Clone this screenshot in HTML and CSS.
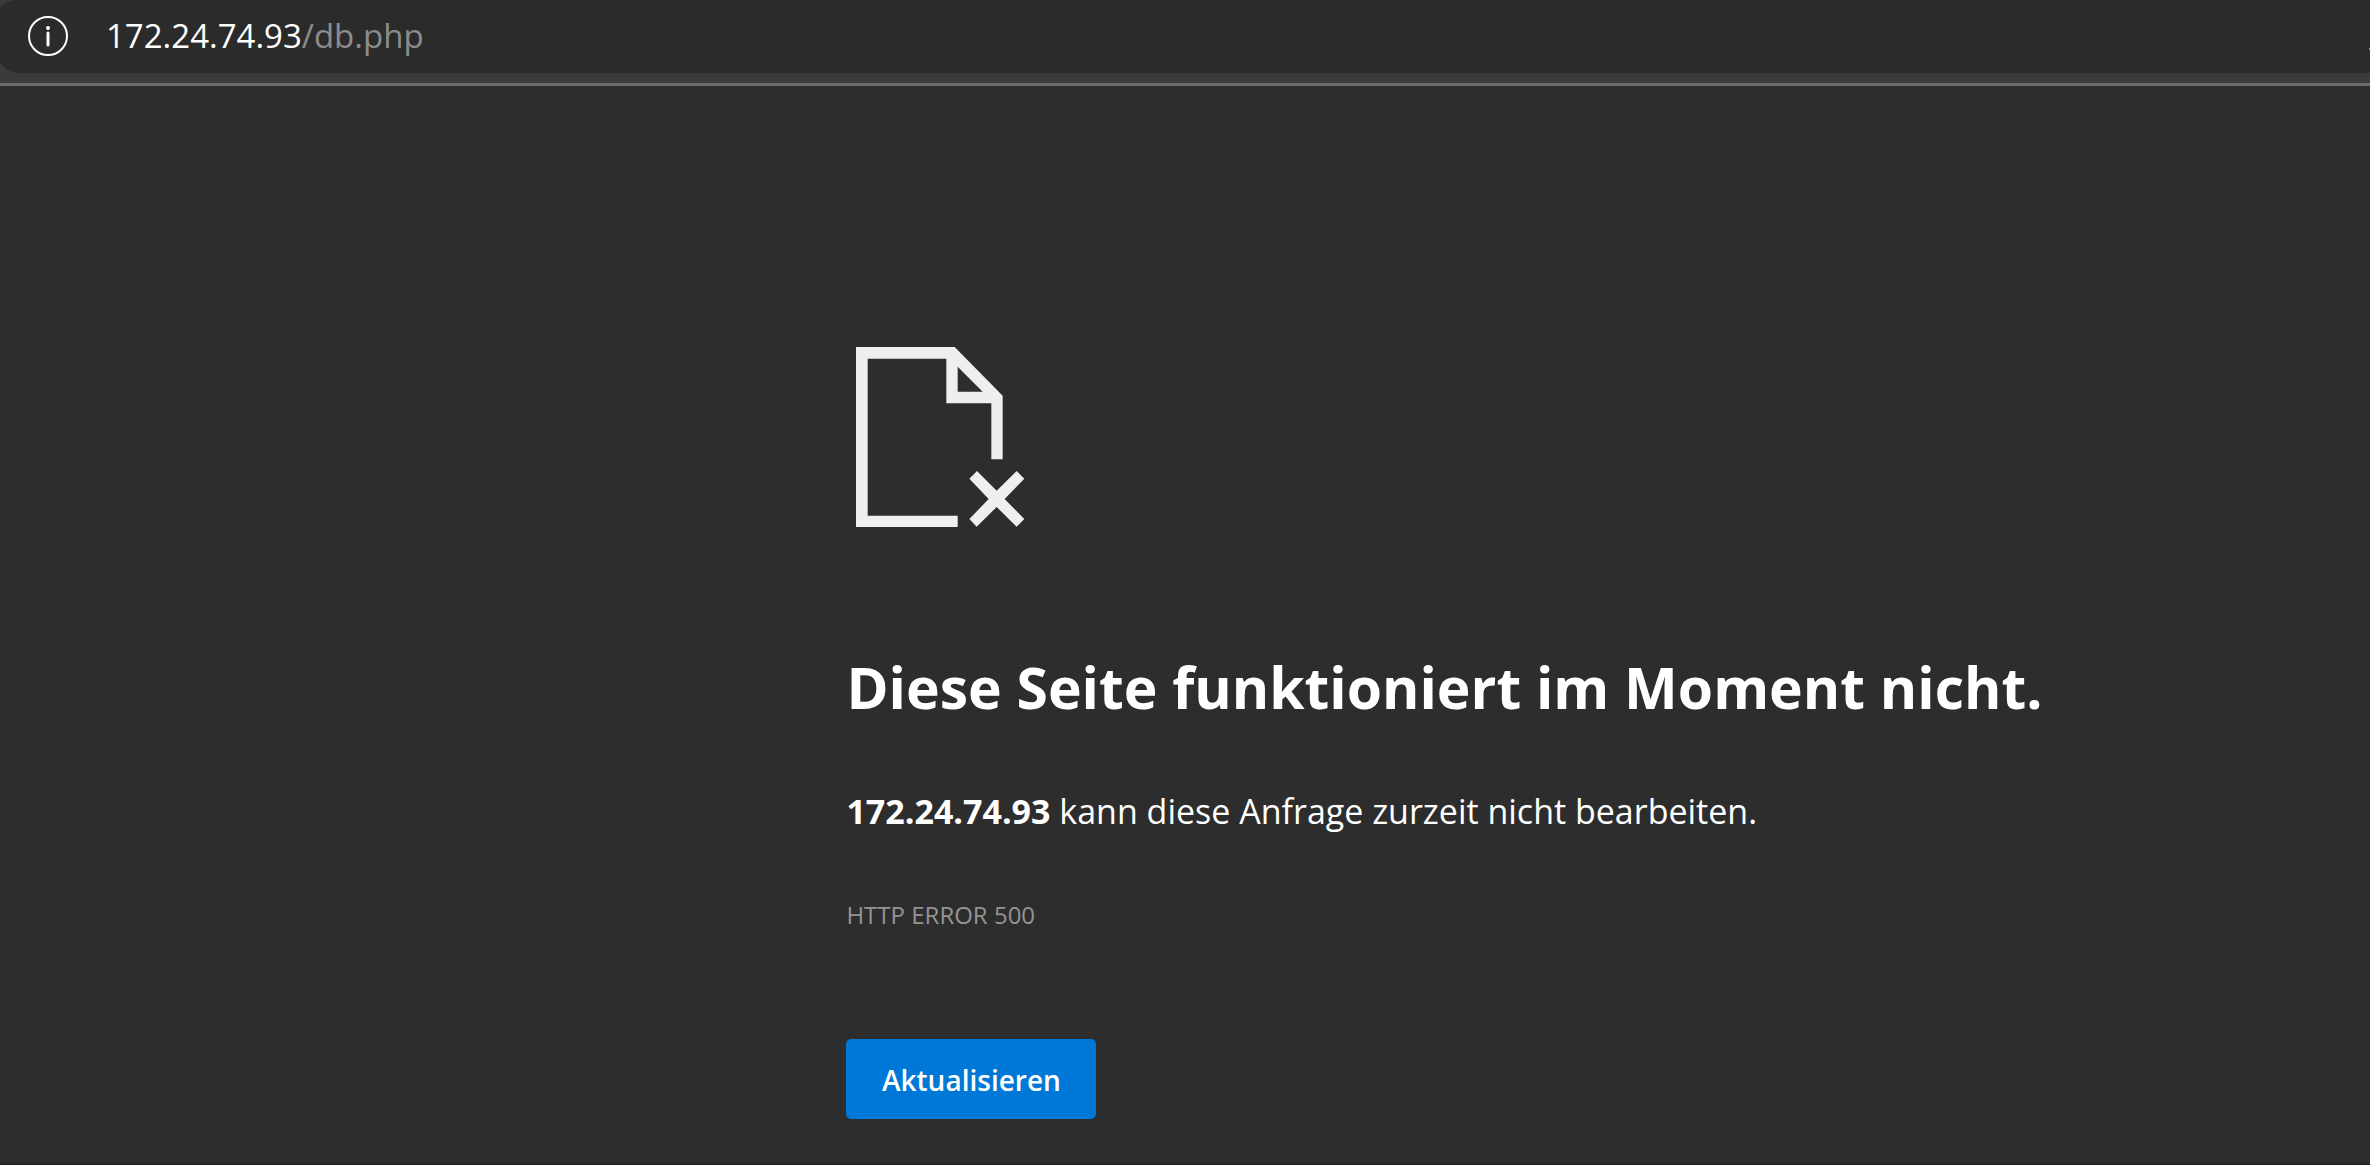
FILE: index.html
```html
<!DOCTYPE html>
<html lang="de">
<head>
<meta charset="utf-8">
<title>172.24.74.93</title>
<link rel="stylesheet" href="styles.css">
</head>
<body>
<header class="toolbar">
  <div class="address">
    <svg class="info" viewBox="0 0 40 40" aria-hidden="true">
      <circle cx="20" cy="20" r="19" fill="none" stroke="#fff" stroke-width="2"/>
      <circle cx="20" cy="12" r="2" fill="#fff"/>
      <path d="M20 17v12" stroke="#fff" stroke-width="3" stroke-linecap="round"/>
    </svg>
    <div class="url">172.24.74.93<span class="path">/db.php</span></div>
    <span class="edge"></span>
  </div>
</header>
<main class="page">
  <section class="error">
    <svg class="icon" viewBox="48 51 540 540" aria-hidden="true">
      <path fill="#efefef" fill-rule="evenodd" d="M78 51H374L518 197V388H484V220H349V86H113V557H383V591H78ZM383 110V185H458Z"/>
      <path fill="#efefef" d="M441 423L500 482L560 423L583 446L524 507L583 567L560 590L500 531L440 590L418 567L476 507L418 446Z"/>
    </svg>
    <h1 class="title">Diese Seite funktioniert im Moment nicht.</h1>
    <p class="message"><strong>172.24.74.93</strong> kann diese Anfrage zurzeit nicht bearbeiten.</p>
    <p class="code">HTTP ERROR 500</p>
    <button class="reload" type="button">Aktualisieren</button>
  </section>
</main>
</body>
</html>
```
FILE: styles.css
```css
* {
  box-sizing: border-box;
}

body {
  margin: 0;
  min-height: 100vh;
  display: flex;
  flex-direction: column;
  background: #2d2d2d;
  color: #fff;
  font-family: "Segoe UI", "Open Sans", "Noto Sans", sans-serif;
  overflow-x: hidden;
}

.toolbar {
  background: #3b3b3b;
  border-bottom: 3px solid #6b6b6b;
  padding-bottom: 10px;
}

.address {
  display: flex;
  align-items: center;
  height: 73px;
  margin-left: -4px;
  padding: 0 0 2px 32px;
  background: #2b2b2b;
  border-radius: 20px 0 0 24px;
}

.info {
  width: 40px;
  height: 40px;
  margin-right: 38px;
}

.url {
  font-size: 33px;
  line-height: 48px;
}

.path {
  color: #8c8c8c;
}

.edge {
  width: 1px;
  height: 2px;
  margin-left: auto;
  margin-top: 26px;
  background: #8c8c8c;
}

.page {
  flex: 1;
  display: grid;
  grid-template-columns: 5fr 9fr;
  padding-top: 261px;
  border-bottom: 1px solid #1c1c1c;
}

.error {
  grid-column: 2;
  display: flex;
  flex-direction: column;
  align-items: flex-start;
}

.icon {
  width: 180px;
  height: 180px;
}

.title {
  margin: 120px 0 0;
  font-size: 57px;
  line-height: 80px;
  font-weight: 700;
}

.message {
  margin: 60px 0 0;
  font-size: 34px;
  line-height: 48px;
}

.code {
  margin: 62px 0 0;
  font-size: 24px;
  line-height: 36px;
  font-weight: 500;
  color: #949494;
}

.reload {
  width: 250px;
  height: 80px;
  margin-top: 106px;
  padding: 2px 0 0;
  border: 0;
  border-radius: 5px;
  background: #0078d7;
  color: #fff;
  font: 600 28px/40px "Segoe UI", "Open Sans", "Noto Sans", sans-serif;
}
```
